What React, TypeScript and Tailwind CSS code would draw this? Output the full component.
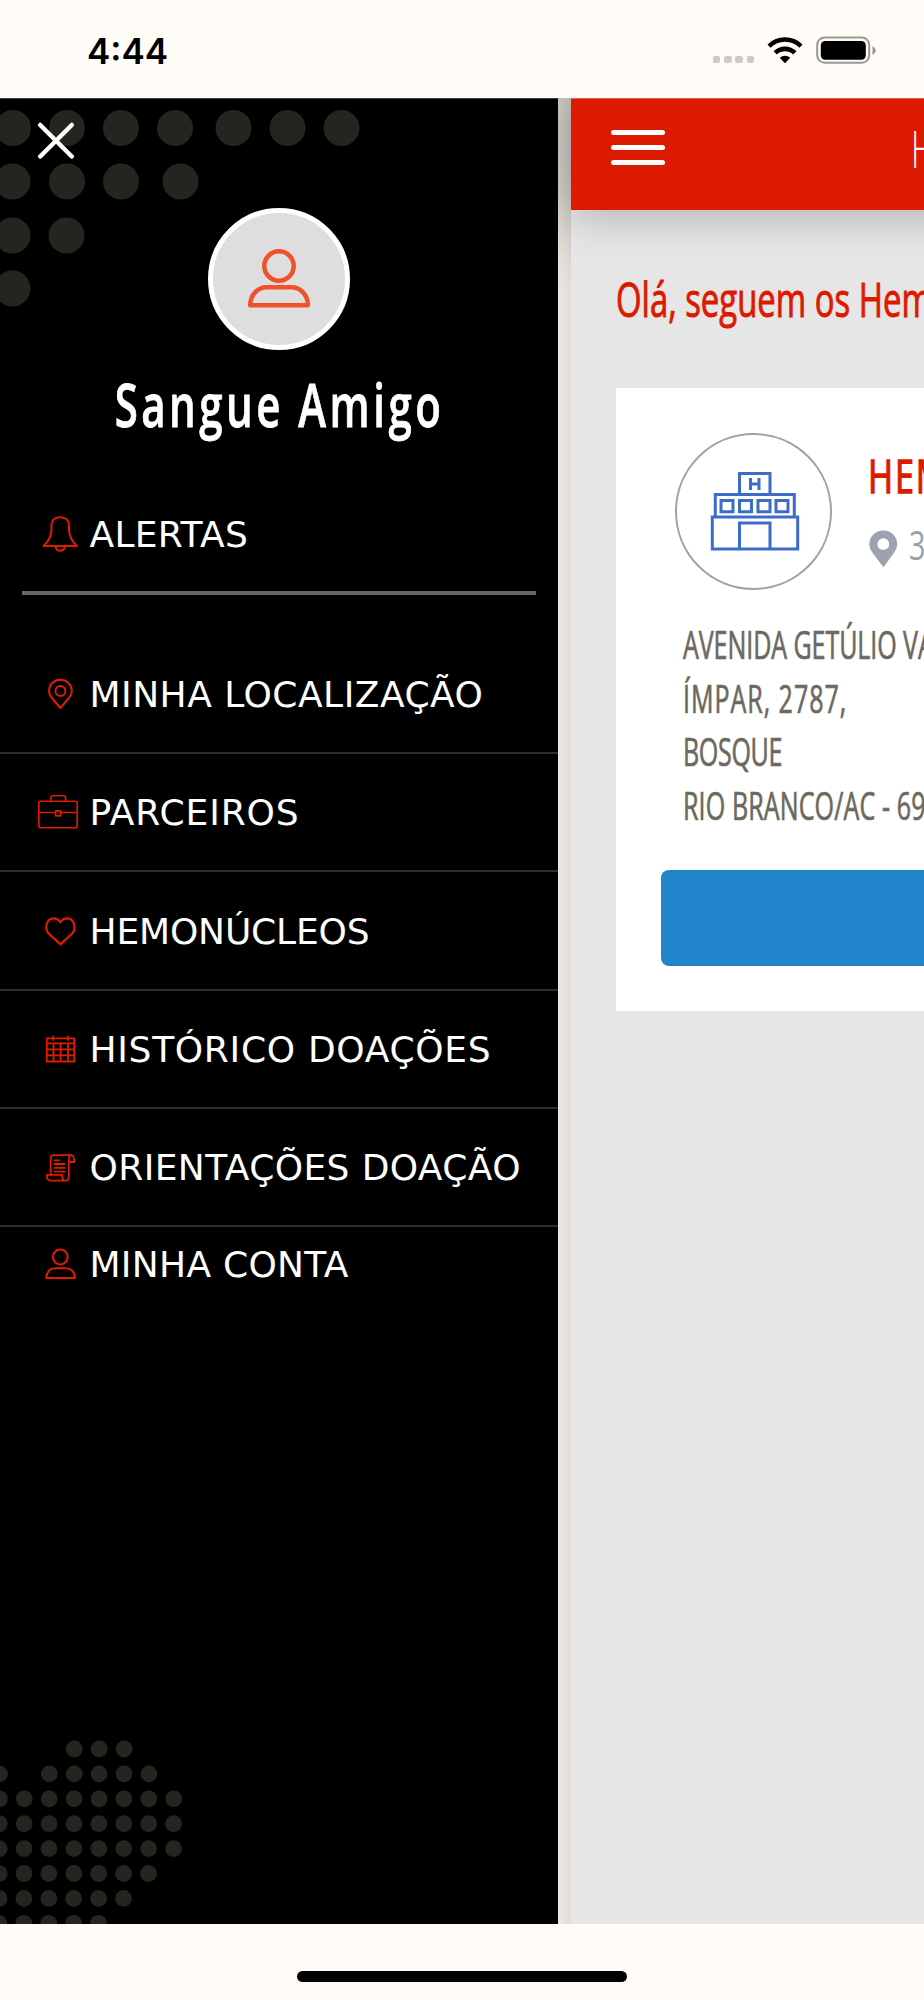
import type { ReactNode } from "react";

const TOP_DOTS = [
  { y: 30, xs: [13, 67, 121, 175, 233.5, 287.5, 341.5] },
  { y: 83.5, xs: [12.5, 67, 121, 180.5] },
  { y: 137.5, xs: [12.5, 66.5] },
  { y: 190.5, xs: [12.5] },
];

const BOTTOM_DOTS = [
  [3, 4, 5],
  [0, 2, 3, 4, 5, 6],
  [0, 1, 2, 3, 4, 5, 6, 7],
  [0, 1, 2, 3, 4, 5, 6, 7],
  [0, 1, 2, 3, 4, 5, 6, 7],
  [0, 1, 2, 3, 4, 5, 6],
  [0, 1, 2, 3, 4, 5],
  [0, 1, 2, 3, 4],
];

function Icon({ children, strokeWidth = 2 }: { children: ReactNode; strokeWidth?: number }) {
  return (
    <svg
      width="48"
      height="40"
      viewBox="0 0 48 40"
      fill="none"
      stroke="#e01b00"
      strokeWidth={strokeWidth}
      strokeLinejoin="round"
      strokeLinecap="round"
      className="ml-9 shrink-0"
    >
      {children}
    </svg>
  );
}

const BellIcon = () => (
  <Icon>
    <path d="M7.500 31 C12.500 26.500 15.500 21 15.500 14 V10 C15.500 5 19 2.200 24 2.200 C29 2.200 33 5 33 10 V14 C33 21 36 26.500 41 31 Z" />
    <path d="M19.500 31.500 C20 34 21.500 35.700 24.300 35.700 C27 35.700 28.500 34 29 31.500" />
  </Icon>
);

const PinIcon = () => (
  <Icon>
    <path d="M24.400 33 L15.500 22.500 C13.800 20.400 13 18.500 13 16 C13 9.500 18 4.800 24.400 4.800 C30.800 4.800 35.800 9.500 35.800 16 C35.800 18.500 35 20.400 33.300 22.500 Z" />
    <circle cx="24.400" cy="16" r="5" />
  </Icon>
);

const BriefcaseIcon = () => (
  <Icon strokeWidth={1.6}>
    <rect x="2.800" y="8.200" width="38.400" height="26.600" rx="2" />
    <path d="M14.800 8 V5 Q14.800 2.800 17 2.800 H27.300 Q29.500 2.800 29.500 5 V8 M3 19.500 H19 M25 19.500 H41" />
    <rect x="19.600" y="17.900" width="5" height="5" />
  </Icon>
);

const HeartIcon = () => (
  <Icon strokeWidth={2.2}>
    <path d="M24.400 32.400 L12.600 21.500 C8.500 17 10 6.500 17.700 6.300 C21 6.300 23 8 24.400 10.200 C25.800 8 27.800 6.300 31.100 6.300 C38.800 6.500 40.300 17 36.200 21.500 Z" />
  </Icon>
);

const CalendarIcon = () => (
  <Icon strokeWidth={1.8}>
    <path
      strokeLinecap="butt"
      d="M10.800 8.400 H38.200 V31.500 H10.800 Z M10.800 13.300 H38.200 M10.800 19.300 H38.200 M10.800 25.300 H38.200 M17.500 13.300 V31.500 M24.600 13.300 V31.500 M31.900 13.300 V31.500 M17.200 5.700 V10.800 M31.900 5.700 V10.800"
    />
  </Icon>
);

const ScrollIcon = () => (
  <Icon strokeWidth={1.8}>
    <path d="M14.700 26.500 V10.500 Q14.700 7.200 18 7.200 H35.500 C32.500 7.800 32.800 11 32.800 14 V29 Q32.800 32.700 29 32.700 H14.500 Q10.800 32.500 10.800 26.800 H26 C26.500 30 26.300 32.700 29 32.700" />
    <path d="M35.500 7.200 Q38.200 7.600 38.200 14 H33 M18.500 12.300 H23.500 M18.500 16 H28.600 M18.500 19.900 H28.600 M18.500 23.700 H28.600" />
  </Icon>
);

const UserIcon = () => (
  <Icon>
    <circle cx="24.300" cy="13" r="7.400" />
    <path d="M10.400 34 C10.400 28 14 24.300 19 24.300 H30 C35 24.300 38.900 28 38.900 34 Z" />
  </Icon>
);

const MENU = [
  { label: "MINHA LOCALIZAÇÃO", icon: <PinIcon />, spacing: "tracking-[0.500px]" },
  { label: "PARCEIROS", icon: <BriefcaseIcon />, spacing: "tracking-[0.900px]" },
  { label: "HEMONÚCLEOS", icon: <HeartIcon />, spacing: "tracking-[-0.150px]" },
  { label: "HISTÓRICO DOAÇÕES", icon: <CalendarIcon />, spacing: "tracking-[0.700px]" },
  { label: "ORIENTAÇÕES DOAÇÃO", icon: <ScrollIcon />, spacing: "tracking-[0.400px]" },
];

function StatusBar() {
  return (
    <div className="flex h-[98px] shrink-0 items-start justify-between bg-[#fffcf7] pr-[48px] pl-[87px]">
      <span className="mt-[31px] font-['Inter'] text-[35px] leading-[40px] font-semibold text-black">
        4:44
      </span>
      <div className="mt-[36px] flex items-start">
        <div className="mt-[19.500px] flex gap-[3.700px]">
          {[0, 1, 2, 3].map((i) => (
            <span key={i} className="h-[7.500px] w-[7.500px] rounded-[2px] bg-[#cccac6]" />
          ))}
        </div>
        <svg width="36" height="28" viewBox="0 0 36 28" className="ml-[13px]">
          <path d="M0.500 8.400 A25 25 0 0 1 35.500 8.400 L32.500 11.800 A20.500 20.500 0 0 0 3.500 11.800 Z" />
          <path d="M6.500 15.200 A16.500 16.500 0 0 1 29.500 15.200 L26.200 18.600 A12 12 0 0 0 9.800 18.600 Z" />
          <path d="M12.700 21.800 A8 8 0 0 1 23.300 21.800 L18 27.200 Z" />
        </svg>
        <svg width="60" height="28" viewBox="0 0 60 28" className="ml-[13px]">
          <rect x="1.200" y="1.400" width="52" height="25.400" rx="7.500" fill="none" stroke="#9a9893" strokeWidth="2" />
          <rect x="4.800" y="5" width="45" height="18.800" rx="4.500" />
          <path d="M56.500 10 Q59.800 12 59.800 14.500 Q59.800 17 56.500 19 Z" fill="#9a9893" />
        </svg>
      </div>
    </div>
  );
}

function Drawer() {
  return (
    <aside className="relative z-20 flex w-[558px] shrink-0 flex-col overflow-hidden border-t border-[#3e3e3b] bg-black">
      <svg width="558" height="1826" className="absolute -top-px left-0" fill="#25241f">
        {TOP_DOTS.map((row) =>
          row.xs.map((x) => <circle key={`${row.y}-${x}`} cx={x} cy={row.y} r="18" />)
        )}
        {BOTTOM_DOTS.map((cols, row) =>
          cols.map((col) => (
            <circle
              key={`b${row}-${col}`}
              cx={-0.4 + col * 24.9 - row * 0.1}
              cy={1651 + row * 24.9}
              r="8.400"
            />
          ))
        )}
      </svg>

      <button type="button" aria-label="Fechar" className="absolute top-[22px] left-[36px]">
        <svg width="40" height="40" viewBox="0 0 40 40" stroke="white" strokeWidth="4.500" strokeLinecap="round">
          <path d="M4.200 4 L35.800 35.500 M35.800 4 L4.200 35.500" />
        </svg>
      </button>

      <div className="relative mt-[109px] flex flex-col items-center">
        <div className="flex h-[142px] w-[142px] items-center justify-center rounded-full border-5 border-white bg-[#dedede]">
          <svg
            width="134"
            height="134"
            viewBox="4 4 134 134"
            fill="none"
            stroke="#f2502c"
            strokeWidth="4.500"
            strokeLinejoin="round"
            className="shrink-0"
          >
            <circle cx="71" cy="58" r="14.700" />
            <path d="M42.200 97.300 C42.500 86 50 79.300 59 79.300 H83 C92 79.300 99.700 86 100 97.300 Z" />
          </svg>
        </div>
        <h1 className="mt-[19px] origin-center scale-x-[0.700] font-['Open_Sans'] text-[60px] leading-[70px] font-semibold tracking-[5px] whitespace-nowrap text-white [-webkit-text-stroke:0.800px_white]">
          Sangue Amigo
        </h1>
      </div>

      <nav className="relative font-['DejaVu_Sans'] text-[36px] leading-[60px] whitespace-nowrap text-white">
        <div className="mt-[66.400px] flex items-center">
          <BellIcon />
          <span className="ml-[5.500px] tracking-[0.300px]">ALERTAS</span>
        </div>
        <div className="mt-[26px] mr-[22px] ml-[22px] h-[4px] bg-[#676565]" />
        <div className="mt-[40.500px]">
          {MENU.map((item) => (
            <div
              key={item.label}
              className="flex h-[118.300px] items-center border-b-2 border-[#2e2e2e] pt-[2px]"
            >
              {item.icon}
              <span className={`ml-[5.500px] ${item.spacing}`}>{item.label}</span>
            </div>
          ))}
          <div className="flex h-[73.600px] items-center">
            <UserIcon />
            <span className="ml-[5.500px] pt-px tracking-[0.300px]">MINHA CONTA</span>
          </div>
        </div>
      </nav>
    </aside>
  );
}

function HospitalIcon() {
  return (
    <svg width="96" height="88" viewBox="0 0 96 88" fill="none" stroke="#3c6cc6" strokeWidth="3">
      <path d="M33.500 26 V5.500 H64 V26 M9.300 48 V26.500 H88.300 V48 M6.300 49 H91.700 V81 H6.300 Z M33.500 81 V55 H64 V81" />
      <path d="M15 32.500 H27 V43.700 H15 Z M33.500 32.500 H45.500 V43.700 H33.500 Z M52 32.500 H64 V43.700 H52 Z M70 32.500 H82 V43.700 H70 Z" />
      <path d="M44.500 10 V22 M53 10 V22 M44.500 16 H53" />
    </svg>
  );
}

function HemocentroCard() {
  return (
    <section className="mt-[37px] ml-[45px] flex h-[623px] w-[700px] flex-col bg-white">
      <div className="flex pt-[45px] pl-[59px]">
        <div className="flex h-[157px] w-[157px] shrink-0 items-center justify-center rounded-full border-2 border-[#9aa2ae]">
          <HospitalIcon />
        </div>
        <div className="ml-[36px] whitespace-nowrap">
          <h2 className="mt-[12px] origin-left scale-x-[0.740] font-['Open_Sans'] text-[46px] leading-[60px] tracking-[2.500px] text-[#dc1a00] [-webkit-text-stroke:1.400px_#dc1a00]">
            HEMOACRE
          </h2>
          <div className="mt-[12px] flex items-start">
            <svg width="30" height="38" viewBox="0 0 30 38" className="mt-[13px] ml-[1px]">
              <path
                fill="#9da3ae"
                fillRule="evenodd"
                d="M14.500 0.500 C22 0.500 28.300 6.500 28.300 14 C28.300 18 26 21 24.500 23.500 L14.500 37.200 L4 23.500 C2 20.500 0.300 18 0.300 14 C0.300 6.500 6.500 0.500 14.500 0.500 Z M14.300 8.300 A5.900 5.900 0 1 0 14.300 20.100 A5.900 5.900 0 1 0 14.300 8.300 Z"
              />
            </svg>
            <span className="ml-[10px] origin-left scale-x-[0.720] font-['Open_Sans'] text-[40px] leading-[56px] text-[#9aa1ad]">
              3 km
            </span>
          </div>
        </div>
      </div>

      <address className="mt-[28px] ml-[67px] origin-left scale-x-[0.650] font-['Open_Sans'] text-[38.500px] leading-[53.500px] whitespace-nowrap text-[#6c695e] not-italic [-webkit-text-stroke:0.700px_#6c695e]">
        <p className="tracking-[-0.100px]">AVENIDA GETÚLIO VARGAS</p>
        <p className="tracking-[1.500px]">ÍMPAR, 2787,</p>
        <p className="tracking-[-0.500px]">BOSQUE</p>
        <p className="tracking-[0.200px]">RIO BRANCO/AC - 69900</p>
      </address>

      <button
        type="button"
        aria-label="Agendar"
        className="mt-[38px] ml-[44.500px] h-[96px] w-[610px] rounded-lg bg-[#2185ce]"
      />
    </section>
  );
}

function Page() {
  return (
    <main className="flex min-w-0 flex-1 overflow-hidden">
      <div className="w-[13px] shrink-0 bg-linear-to-r from-[#ece8e1] to-[#e2dbd6]">
        <div className="h-[190px] bg-linear-to-b from-black/14 via-black/10 to-transparent" />
      </div>
      <div className="flex w-[790px] shrink-0 flex-col bg-[#e6e6e6]">
        <header className="flex h-[112px] shrink-0 items-start border-t border-[#d9634f] bg-[#dc1a00] shadow-[0_6px_44px_rgba(0,0,0,0.240)]">
          <div className="mt-[31px] ml-[40px] flex w-[54px] flex-col gap-[10.600px]">
            <span className="h-[4.500px] rounded-full bg-white" />
            <span className="h-[4.500px] rounded-full bg-white" />
            <span className="h-[4.500px] rounded-full bg-white" />
          </div>
          <span className="mt-[14px] ml-[245.500px] origin-left scale-x-[0.640] font-['Open_Sans'] text-[52px] leading-[70px] font-light text-white">
            Hemonúcleos
          </span>
        </header>

        <p className="mt-[47px] mb-[11px] ml-[45px] origin-left scale-x-[0.685] font-['Open_Sans'] text-[48px] leading-[83px] whitespace-nowrap text-[#dc1a00] [-webkit-text-stroke:1px_#dc1a00]">
          Olá, seguem os Hemonúcleos
        </p>
        <HemocentroCard />
      </div>
    </main>
  );
}

export default function App() {
  return (
    <div className="flex h-[2000px] w-[924px] flex-col overflow-hidden bg-[#fffcf7]">
      <StatusBar />
      <div className="flex h-[1826px] shrink-0 overflow-hidden">
        <Drawer />
        <Page />
      </div>
      <div className="flex flex-1 justify-center pt-[47px]">
        <div className="h-[11px] w-[330px] rounded-full bg-black" />
      </div>
    </div>
  );
}
